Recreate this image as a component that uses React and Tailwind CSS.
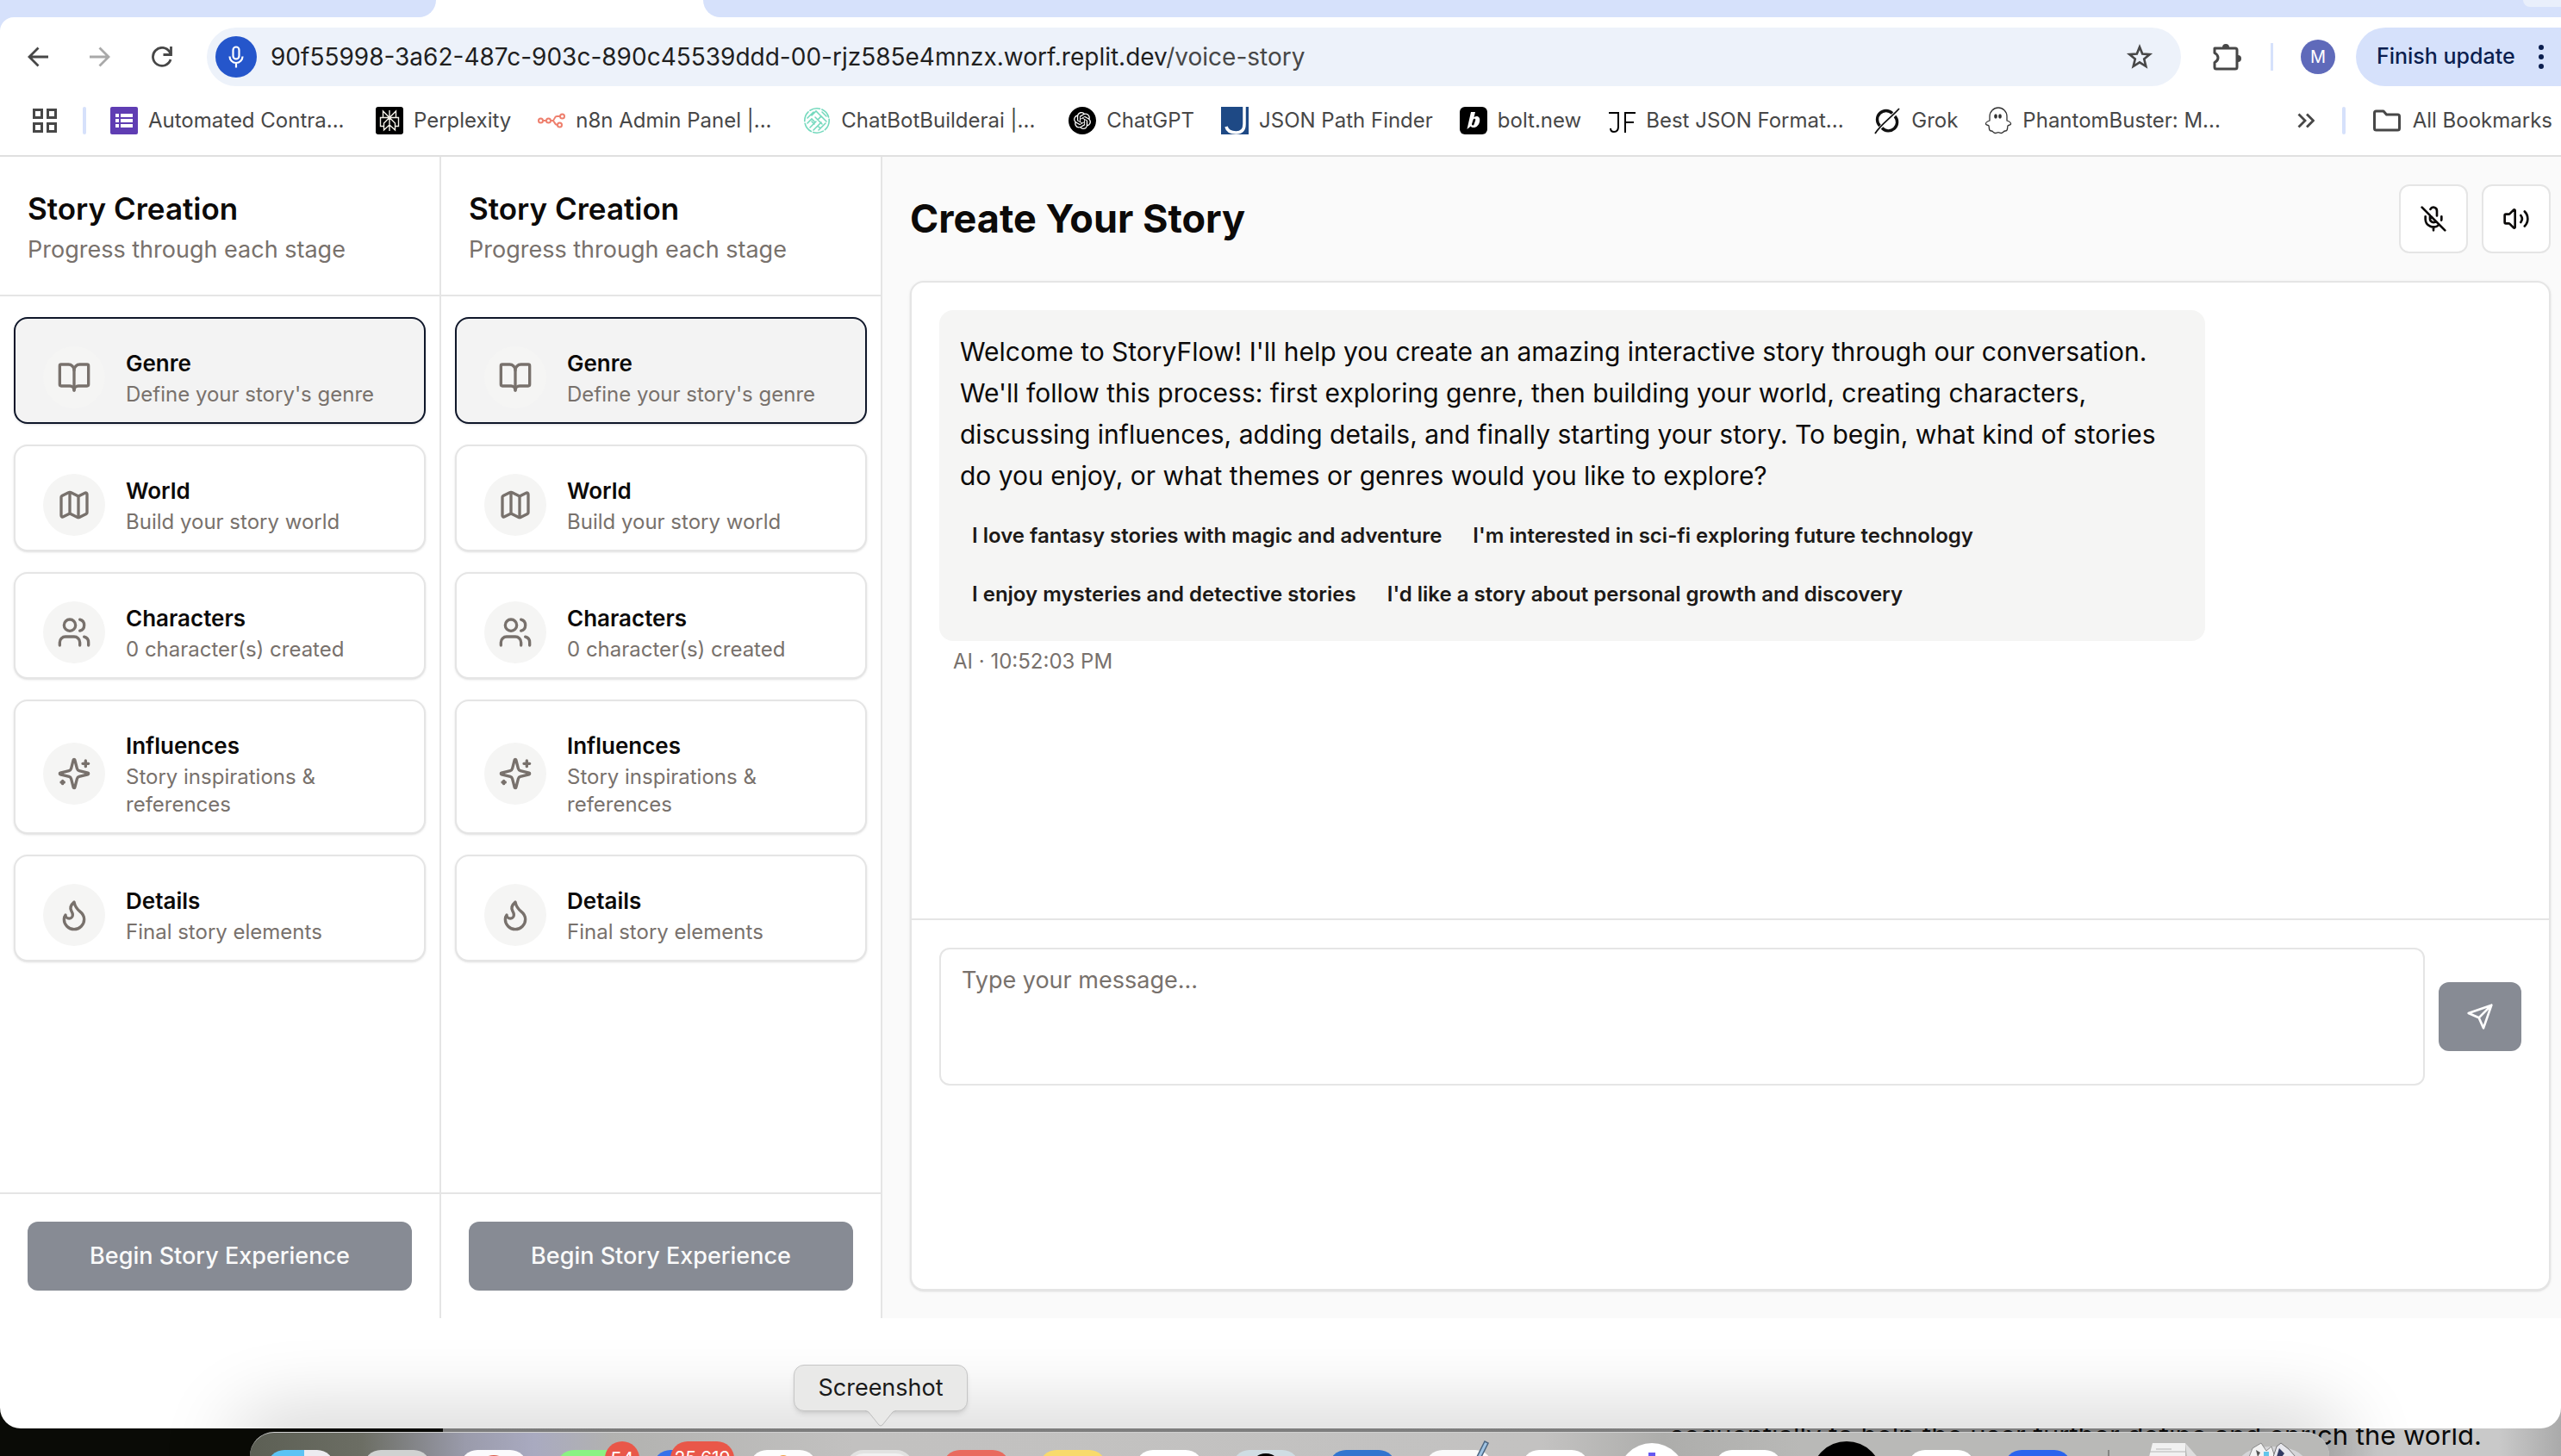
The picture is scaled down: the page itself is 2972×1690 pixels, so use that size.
import React from "react";
import { BookOpen, Map } from "lucide-react";
import { SiOpenai } from "react-icons/si";

function Line({ children, className }) {
  return (
    <svg viewBox="0 0 24 24" fill="none" stroke="currentColor" strokeWidth="2" strokeLinecap="round" strokeLinejoin="round" className={className} aria-hidden="true">
      {children}
    </svg>
  );
}

const UsersIcon = (p) => (
  <Line {...p}>
    <path d="M16 21v-2a4 4 0 0 0-4-4H6a4 4 0 0 0-4 4v2" />
    <circle cx="9" cy="7" r="4" />
    <path d="M22 21v-2a4 4 0 0 0-3-3.87" />
    <path d="M16 3.13a4 4 0 0 1 0 7.75" />
  </Line>
);
const SparklesIcon = (p) => (
  <Line {...p}>
    <path d="M9.937 15.5A2 2 0 0 0 8.5 14.063l-6.135-1.582a.5.5 0 0 1 0-.962L8.5 9.936A2 2 0 0 0 9.937 8.5l1.582-6.135a.5.5 0 0 1 .963 0L14.063 8.5A2 2 0 0 0 15.5 9.937l6.135 1.581a.5.5 0 0 1 0 .964L15.5 14.063a2 2 0 0 0-1.437 1.437l-1.582 6.135a.5.5 0 0 1-.963 0z" />
    <path d="M20 3v4M22 5h-4M4 17v2M5 18H3" />
  </Line>
);
const FlameIcon = (p) => (
  <Line {...p}>
    <path d="M8.5 14.5A2.5 2.5 0 0 0 11 12c0-1.38-.5-2-1-3-1.072-2.143-.224-4.054 2-6 .5 2.5 2 4.9 4 6.5 2 1.6 3 3.5 3 5.5a7 7 0 1 1-14 0c0-1.153.433-2.294 1-3a2.5 2.5 0 0 0 2.5 2.5z" />
  </Line>
);
const MicOffIcon = (p) => (
  <Line {...p}>
    <path d="M2 2l20 20M18.89 13.23A7.12 7.12 0 0 0 19 12v-2M5 10v2a7 7 0 0 0 12 5M15 9.34V5a3 3 0 0 0-5.68-1.33M9 9v3a3 3 0 0 0 5.12 2.12M12 19v3" />
  </Line>
);
const VolumeIcon = (p) => (
  <Line {...p}>
    <path d="M11 4.702a.705.705 0 0 0-1.203-.498L6.413 7.587A1.4 1.4 0 0 1 5.416 8H3a1 1 0 0 0-1 1v6a1 1 0 0 0 1 1h2.416a1.4 1.4 0 0 1 .997.413l3.383 3.384A.705.705 0 0 0 11 19.298z" />
    <path d="M16 9a5 5 0 0 1 0 6M19.364 18.364a9 9 0 0 0 0-12.728" />
  </Line>
);
const SendIcon = (p) => (
  <Line {...p}>
    <path d="m22 2-7 20-4-9-9-4ZM22 2 11 13" />
  </Line>
);

/* ---------- favicons ---------- */

const FormsIcon = () => (
  <svg viewBox="0 0 32 32" className="size-8">
    <rect width="32" height="32" rx="2" fill="#5f3db3" />
    <g fill="#fff">
      <rect x="6" y="8" width="4" height="4" /><rect x="6" y="14" width="4" height="4" /><rect x="6" y="20" width="4" height="4" />
      <rect x="12" y="8" width="14" height="4" /><rect x="12" y="14" width="14" height="4" /><rect x="12" y="20" width="14" height="4" />
    </g>
  </svg>
);
const PerplexityIcon = () => (
  <svg viewBox="0 0 32 32" className="size-8">
    <rect width="32" height="32" rx="3" fill="#000" />
    <path d="M16 4v24M8.500 5l7.500 7.500L23.500 5v7.500h-15zM8.500 12.500H5.500v10h4M23.500 12.500h3v10h-4M16 12.500l-6.500 6.500v8L16 21l6.500 6v-8z" fill="none" stroke="#f4f1e8" strokeWidth="1.400" />
  </svg>
);
const N8nIcon = () => (
  <svg viewBox="0 0 32 32" className="size-8" fill="none" stroke="#ee7f6d" strokeWidth="2">
    <circle cx="3.500" cy="16" r="2.500" /><circle cx="12.500" cy="16" r="2.500" /><circle cx="28.500" cy="11" r="2.500" /><circle cx="25.500" cy="21" r="2.500" />
    <path d="M6 16h4M15 16h2c3 0 2-5 5-5h4M17 16c3 0 2 5 6 5" />
  </svg>
);
const ChatBotIcon = () => (
  <svg viewBox="0 0 32 32" className="size-8" fill="none" stroke="#74d9bd" strokeWidth="1.600" strokeLinecap="round">
    <circle cx="16" cy="16" r="14.200" strokeDasharray="12 2.500" />
    <path d="M5 13l7-7M5 19l5-5 3 3M8 24l7-7M10 10l5-5 4 4M12 27l9-9M14 12l8 8M17 7l9 9M18 27l8-8M22 6l5 5M13 20l-3-3M17 15l4-4 6 6M17 22l3 3" />
  </svg>
);
const ChatGptIcon = () => (
  <span className="flex size-8 items-center justify-center rounded-full bg-black text-white">
    <SiOpenai className="size-5" />
  </span>
);
const JsonPathIcon = () => (
  <svg viewBox="0 0 32 32" className="size-8">
    <rect width="32" height="32" fill="#1e4985" />
    <path d="M27 0v20c0 7-3 10-9.500 10S7 27 6 23" fill="none" stroke="#fff" strokeWidth="3.500" />
  </svg>
);
const BoltIcon = () => (
  <svg viewBox="0 0 32 32" className="size-8">
    <rect width="32" height="32" rx="6" fill="#000" />
    <path d="M13 6h5l-1.500 6.200c1-.8 2-1.100 3-1.100 3 0 4.300 2.400 3.600 6-.8 4.300-3.600 7-7 7-1.600 0-2.700-.6-3.300-1.700L8.500 26z" fill="#fff" />
    <path d="M17 15l-1.700 5.200" stroke="#000" strokeWidth="2.600" strokeLinecap="round" />
  </svg>
);
const JfIcon = () => (
  <svg viewBox="0 0 32 32" className="size-8" fill="none" stroke="#000" strokeWidth="2">
    <path d="M1 7h12M12 7v16c0 4-2 6-5 6-2 0-4-1-4-4M20 30V7h12M20 18h10" />
  </svg>
);
const GrokIcon = () => (
  <svg viewBox="0 0 32 32" className="size-8" fill="none" stroke="#111">
    <path d="M22 7.500A10 10 0 0 0 7.500 22M10 24.500A10 10 0 0 0 25 11" strokeWidth="3.400" />
    <path d="M2 31C8 21 20 13 30 2" strokeWidth="1.800" />
  </svg>
);
const GhostIcon = () => (
  <svg viewBox="0 0 32 32" className="size-8" fill="none" stroke="#333" strokeWidth="1.300" strokeLinejoin="round">
    <path d="M6 16V11a10 10 0 0 1 20 0v5c3 1 5 2 4.500 4-.4 1.500-3 1-3.500 2-.8 3 .5 6-3 6-2 0-2.500 2.500-4.500 2.500-1.600 0-2-.8-3.500-.8s-2 .8-3.500.8C10 30.500 10 28 8 28c-3.500 0-2.200-3-3-6-.5-1-3.100-.5-3.500-2C1 18 3 17 6 16z" />
    <ellipse cx="13" cy="11" rx="1.200" ry="2" fill="#333" /><ellipse cx="18" cy="11" rx="1.200" ry="2" fill="#333" />
  </svg>
);

const bookmarks = [
  { label: "Automated Contra...", Icon: FormsIcon, wide: true },
  { label: "Perplexity", Icon: PerplexityIcon },
  { label: "n8n Admin Panel |...", Icon: N8nIcon, wide: true },
  { label: "ChatBotBuilderai |...", Icon: ChatBotIcon, wide: true },
  { label: "ChatGPT", Icon: ChatGptIcon },
  { label: "JSON Path Finder", Icon: JsonPathIcon },
  { label: "bolt.new", Icon: BoltIcon },
  { label: "Best JSON Format...", Icon: JfIcon, wide: true },
  { label: "Grok", Icon: GrokIcon },
  { label: "PhantomBuster: M...", Icon: GhostIcon, wide: true },
];

function BrowserChrome() {
  return (
    <header className="shrink-0 border-b-2 border-[#e0e0e0] bg-white text-[#474747]">
      <div className="relative flex h-5 justify-between">
        <div className="w-[506px] rounded-br-3xl bg-[#d6e1fb]" />
        <div className="ml-[310px] flex flex-1 justify-end overflow-hidden rounded-bl-3xl bg-[#d6e1fb]">
          <div className="h-2 w-11 rounded-bl-2xl bg-[#e9effb]" />
        </div>
      </div>
      <div className="bg-[linear-gradient(to_right,#d6e1fb_40px,#ffffff_40px)]">
        <div className="flex h-[92px] items-center rounded-tl-2xl bg-white pl-8">
          <button aria-label="Back" className="text-[#474747]">
            <svg viewBox="0 0 24 24" className="size-6" fill="none" stroke="currentColor" strokeWidth="2.800"><path d="M24 12H2M12.500 1.500 2 12l10.500 10.500" /></svg>
          </button>
          <button aria-label="Forward" className="ml-12 text-[#a9a9a9]">
            <svg viewBox="0 0 24 24" className="size-6" fill="none" stroke="currentColor" strokeWidth="2.800"><path d="M0 12h22M11.500 1.500 22 12 11.500 22.500" /></svg>
          </button>
          <button aria-label="Reload" className="ml-12 text-[#474747]">
            <svg viewBox="0 0 24 24" className="size-6" fill="none" stroke="currentColor" strokeWidth="2.800"><path d="M22 15A10.500 10.500 0 1 1 21 6.500L22.500 9" /><path d="M22.500 0v9.500H13.500" /></svg>
          </button>
          <div className="ml-10 flex h-[68px] flex-1 items-center rounded-full bg-[#edf2fa] pr-8 pl-2.5">
            <span className="flex size-12 items-center justify-center rounded-full bg-[#2556cb] text-white">
              <svg viewBox="0 0 18 26" className="h-[26px] w-[18px]" fill="none" stroke="currentColor" strokeWidth="2.200"><rect x="5.500" y="1.500" width="7" height="14" rx="3.500" /><path d="M1.500 12.500a7.500 7.500 0 0 0 15 0M9 20v5.500" /></svg>
            </span>
            <div className="ml-4 flex-1 text-[28px] whitespace-nowrap text-[#1f1f1f]">
              90f55998-3a62-487c-903c-890c45539ddd-00-rjz585e4mnzx.worf.replit.dev<span className="text-[#474747]">/voice-story</span>
            </div>
            <button aria-label="Bookmark this tab" className="text-[#474747]">
              <svg viewBox="0 0 32 32" className="size-8" fill="none" stroke="currentColor" strokeWidth="2.600"><path d="M16 4.500l3.200 8 8.600.6-6.600 5.500 2.100 8.400L16 22.400 8.700 27l2.100-8.400-6.600-5.500 8.600-.6z" /></svg>
            </button>
          </div>
          <button aria-label="Extensions" className="ml-9 text-[#474747]">
            <svg viewBox="0 0 36 36" className="size-9" fill="none" stroke="currentColor" strokeWidth="3"><path d="M3 8h24q2 0 2 2v20q0 2-2 2H5q-2 0-2-2v-5.500q4-2 4-5.500t-4-5.500z" strokeLinejoin="round" /><path d="M12 7a4 4 0 0 1 8 0zM30 16a4 4 0 0 1 0 8z" fill="currentColor" stroke="none" /></svg>
          </button>
          <div className="ml-8 h-8 w-[3px] bg-[#d6e1fb]" />
          <div className="ml-8 flex size-10 items-center justify-center rounded-full bg-[#5f6aba] text-xl text-white">M</div>
          <button className="ml-6 flex h-[68px] w-[238px] items-center justify-between rounded-l-full rounded-r-[34px] bg-[#d6e1fb] pr-5 pl-6 text-[25px] font-medium whitespace-nowrap text-[#0b1e4f]">
            Finish update
            <svg viewBox="0 0 6 28" className="h-7 w-1.5" fill="currentColor"><circle cx="3" cy="3" r="3" /><circle cx="3" cy="14" r="3" /><circle cx="3" cy="25" r="3" /></svg>
          </button>
        </div>
      </div>
      <nav aria-label="Bookmarks" className="flex h-[68px] items-start pt-3 pr-2.5 pl-9 text-2xl leading-8">
        <button aria-label="Apps" className="flex h-8 items-center">
          <svg viewBox="0 0 32 32" className="size-8" fill="none" stroke="currentColor" strokeWidth="3"><rect x="3.500" y="3.500" width="9" height="9" /><rect x="19.500" y="3.500" width="9" height="9" /><rect x="3.500" y="19.500" width="9" height="9" /><rect x="19.500" y="19.500" width="9" height="9" /></svg>
        </button>
        <div className="ml-7 h-8 w-1 rounded bg-[#d6e1fb]" />
        <div className="ml-7 flex flex-1 gap-[31px]">
          {bookmarks.map(({ label, Icon, wide }) => (
            <a key={label} href="#" className={wide ? "flex w-[277px] shrink-0 gap-3 whitespace-nowrap" : "flex shrink-0 gap-3 whitespace-nowrap"}>
              <Icon />
              {label}
            </a>
          ))}
        </div>
        <button aria-label="More bookmarks" className="flex h-8 items-center">
          <svg viewBox="0 0 20 18" className="h-[18px] w-5" fill="none" stroke="currentColor" strokeWidth="2.800"><path d="M1.500 1.500 9 9l-7.500 7.500M11 1.500 18.500 9 11 16.500" /></svg>
        </button>
        <div className="ml-8 h-8 w-1 rounded bg-[#d6e1fb]" />
        <a href="#" className="ml-8 flex gap-3.5 whitespace-nowrap">
          <svg viewBox="0 0 32 32" className="size-8" fill="none" stroke="currentColor" strokeWidth="3" strokeLinejoin="round"><path d="M1.500 7q0-2 2-2H12l3.500 4h13q2 0 2 2v14q0 2-2 2h-25q-2 0-2-2z" /></svg>
          All Bookmarks
        </a>
      </nav>
    </header>
  );
}

const stages = [
  { title: "Genre", text: "Define your story's genre", Icon: BookOpen, active: true },
  { title: "World", text: "Build your story world", Icon: Map },
  { title: "Characters", text: "0 character(s) created", Icon: UsersIcon },
  { title: "Influences", text: "Story inspirations & references", Icon: SparklesIcon },
  { title: "Details", text: "Final story elements", Icon: FlameIcon },
];

function StageCard({ title, text, Icon, active }) {
  return (
    <div
      className={
        active
          ? "flex items-center gap-6 rounded-2xl border-2 border-[#0f172a] bg-[#f3f3f3] px-8 pt-8 pb-4 shadow-sm"
          : "flex items-center gap-6 rounded-2xl border-2 border-[#e5e5e5] bg-white px-8 pt-8 pb-4 shadow-sm"
      }
    >
      <div className="flex size-[72px] shrink-0 items-center justify-center rounded-full bg-[#f5f5f4] text-[#78716c]">
        <Icon className="size-10" />
      </div>
      <div>
        <h3 className="text-[26px] leading-10 font-semibold text-[#0c0a09]">{title}</h3>
        <p className="text-2xl leading-8 text-[#78716c]">{text}</p>
      </div>
    </div>
  );
}

function Sidebar() {
  return (
    <aside className="flex w-[512px] shrink-0 flex-col border-r-2 border-[#e5e5e5] bg-white">
      <div className="border-b-2 border-[#e5e5e5] p-8">
        <h2 className="text-[35px] leading-[56px] font-semibold text-[#0c0a09]">Story Creation</h2>
        <p className="text-[27px] leading-10 text-[#78716c]">Progress through each stage</p>
      </div>
      <div className="flex flex-1 flex-col gap-6 px-4 py-6">
        {stages.map((s) => (
          <StageCard key={s.title} {...s} />
        ))}
      </div>
      <div className="border-t-2 border-[#e5e5e5] p-8">
        <button className="h-20 w-full rounded-xl bg-[#878b94] text-[27px] font-medium text-[#fafafa]">Begin Story Experience</button>
      </div>
    </aside>
  );
}

const suggestions = [
  "I love fantasy stories with magic and adventure",
  "I'm interested in sci-fi exploring future technology",
  "I enjoy mysteries and detective stories",
  "I'd like a story about personal growth and discovery",
];

function StoryPanel() {
  return (
    <main className="flex flex-1 flex-col bg-[#fafafa] py-8 pr-3 pl-8 text-[#0c0a09]">
      <div className="flex items-center justify-between">
        <h1 className="text-[45px] font-bold">Create Your Story</h1>
        <div className="flex gap-4">
          <button aria-label="Turn microphone on" className="flex size-20 items-center justify-center rounded-xl border-2 border-[#e5e5e5] bg-white">
            <MicOffIcon className="size-8" />
          </button>
          <button aria-label="Toggle sound" className="flex size-20 items-center justify-center rounded-xl border-2 border-[#e5e5e5] bg-white">
            <VolumeIcon className="size-8" />
          </button>
        </div>
      </div>
      <section className="mt-8 flex flex-1 flex-col rounded-2xl border-2 border-[#e5e5e5] bg-white shadow-sm">
        <div className="h-[738px] p-8">
          <div className="max-w-4/5 rounded-2xl bg-[#f5f5f4] p-6">
            <p className="text-3xl leading-12">
              Welcome to StoryFlow! I'll help you create an amazing interactive story through our conversation. We'll follow this process: first exploring genre, then building your world, creating characters, discussing influences, adding details, and finally starting your story. To begin, what kind of stories do you enjoy, or what themes or genres would you like to explore?
            </p>
            <div className="mt-4 flex flex-wrap gap-2">
              {suggestions.map((s) => (
                <button key={s} className="h-15 px-3.5 text-2xl font-semibold text-[#1c1917]">{s}</button>
              ))}
            </div>
          </div>
          <p className="mt-2 px-4 text-2xl leading-8 text-[#78716c]">AI · 10:52:03 PM</p>
        </div>
        <div className="flex items-center gap-4 border-t-2 border-[#e5e5e5] p-8">
          <textarea aria-label="Message" placeholder="Type your message..." className="h-40 flex-1 resize-none rounded-xl border-2 border-[#e5e5e5] bg-white px-6 py-4 text-[27px] leading-10 placeholder:text-[#78716c]" />
          <button aria-label="Send" className="flex h-20 w-24 items-center justify-center rounded-xl bg-[#878b94] text-white">
            <SendIcon className="size-8" />
          </button>
        </div>
      </section>
    </main>
  );
}

/* ---------- dock ---------- */

const tile = "relative h-20 w-[78px] shrink-0 overflow-hidden rounded-[20px]";

function Dock() {
  return (
    <div className="absolute inset-x-0 bottom-0 h-7 overflow-visible pr-[269px] pl-[290px] text-white">
      <div className="flex h-7 items-start gap-[34px] rounded-t-[28px] border-t border-[#d0d0d0] bg-[linear-gradient(to_right,#5c5f54_0px,#6c6e64_130px,#9a9bab_250px,#a9aac0_330px,#b2b2b0_420px,#c2c1c0_700px,#c3c2c1_1500px,#adadab_1640px,#b9b9b7_1800px,#b9b9b7_100%)] px-5 pt-5 shadow-[0_0_90px_20px_rgba(0,0,0,0.2)]">
        <div className="h-2 w-[78px] overflow-hidden"><div className={`${tile} bg-[linear-gradient(to_right,#5cc3f4_55%,#ecebf0_55%)]`} /></div>
        <div className="h-2 w-[78px] overflow-hidden"><div className={`${tile} bg-[#d0d2d1]`} /></div>
        <div className="h-2 w-[78px] overflow-hidden"><div className={`${tile} bg-[#fbfafc]`}><div className="mx-auto mt-1.5 size-10 rounded-full bg-[#d95845]" /></div></div>
        <div className="relative h-2 w-[78px]">
          <div className="h-2 overflow-hidden"><div className={`${tile} bg-[#8bf283]`} /></div>
          <span className="absolute -top-2.5 left-14 flex h-10 min-w-10 items-center justify-center rounded-full bg-[#e95749] px-1 text-[22px]">54</span>
        </div>
        <div className="relative h-2 w-[78px]">
          <div className="h-2 overflow-hidden"><div className={`${tile} bg-[#3670ea]`} /></div>
          <span className="absolute -top-2.5 left-5 flex h-10 w-[74px] items-center justify-center rounded-full bg-[#e95749] text-[21px]">25,619</span>
        </div>
        <div className="h-2 w-[78px] overflow-hidden"><div className={`${tile} bg-[#fdfdfd]`}><div className="mx-auto mt-1.5 size-4 rounded-full bg-[#f0a044]" /></div></div>
        <div className="h-2 w-[78px] overflow-hidden"><div className={`${tile} border-4 border-[#e2e2e1] bg-[#f1f1f1]`} /></div>
        <div className="h-2 w-[78px] overflow-hidden"><div className={`${tile} bg-[#e96a5e]`} /></div>
        <div className="h-2 w-[78px] overflow-hidden"><div className={`${tile} bg-[#f8da6c]`} /></div>
        <div className="h-2 w-[78px] overflow-hidden"><div className={`${tile} bg-white`} /></div>
        <div className="h-2 w-[78px] overflow-hidden"><div className={`${tile} bg-[#d0dde3]`}><div className="mx-auto mt-1 size-9 rounded-full bg-black" /></div></div>
        <div className="h-2 w-[78px] overflow-hidden"><div className={`${tile} bg-[#3375cf]`} /></div>
        <div className="relative h-2 w-[78px]">
          <div className="h-2 overflow-hidden"><div className={`${tile} bg-[#fafafa]`} /></div>
          <svg viewBox="0 0 20 20" className="absolute -top-3 left-14 size-5"><path d="M4 20 13 2l4 2-8 16z" fill="#9fc4e4" stroke="#4b6580" strokeWidth="1.500" /></svg>
        </div>
        <div className="h-2 w-[78px] overflow-hidden"><div className={`${tile} bg-white`} /></div>
        <div className="relative h-2 w-[78px]">
          <svg viewBox="0 0 78 16" className="absolute -top-2 left-0 h-4 w-[78px]"><circle cx="39" cy="39" r="39" fill="#fff" /><path d="M35 16v-5h8v5M22 16v-1h3v1M53 16v-1h3v1" fill="#6558f0" /></svg>
        </div>
        <div className="h-2 w-[78px] overflow-hidden"><div className={`${tile} bg-white`} /></div>
        <div className="relative h-2 w-[78px]">
          <svg viewBox="0 0 82 18" className="absolute -top-2.5 left-0 h-[18px] w-[82px]"><circle cx="41" cy="41" r="41" fill="#000" /></svg>
        </div>
        <div className="h-2 w-[78px] overflow-hidden"><div className={`${tile} bg-white`} /></div>
        <div className="h-2 w-[78px] overflow-hidden"><div className={`${tile} bg-[#2b64ee]`} /></div>
        <div className="relative ml-2 h-2 w-0.5 bg-[#858583]" />
        <svg viewBox="0 0 60 18" className="-mt-2.5 ml-2.5 h-[18px] w-[60px] shrink-0"><path d="M6 2h38v16H2z" fill="#f1f1f1" /><path d="M44 2l14 16H46z" fill="#dedede" /><path d="M2 12h42M10 9h18" stroke="#b5b5b5" strokeWidth="1" /></svg>
        <svg viewBox="0 0 78 18" className="-mt-2.5 ml-3 h-[18px] w-[78px] shrink-0"><ellipse cx="39" cy="22" rx="37" ry="16" fill="#d5d5d8" /><path d="M12 18 16 8l10-6 6 9 6-5 4 12z" fill="#f2f2f2" stroke="#8a8a8a" /><path d="M40 18 44 6l5-4 9 7 8 9z" fill="#e8e8ee" stroke="#777" /><path d="M47 8l6 6-3 4h-6z" fill="#333c63" /><path d="M29 12h6v6h-6z" fill="#62c6ea" /><path d="M20 10l5 3-3 5z" fill="#555" /></svg>
      </div>
    </div>
  );
}

function DockTooltip() {
  return (
    <div className="absolute bottom-[52px] left-[921px] z-10 flex h-[54px] w-[202px] items-center justify-center rounded-xl border border-[#c6c6c6] bg-[#e9e9e8] text-[27px] text-[#1a1a1a] shadow-md">
      Screenshot
      <svg viewBox="0 0 36 20" className="absolute top-[51px] left-[82px] h-5 w-9"><path d="M0 0h36v1.500q-4 0-6 4L20 18q-2 2-4 0L6 5.500q-2-4-6-4z" fill="#e9e9e8" /><path d="M0 1.500q4 0 6 4L16 18q2 2 4 0L30 5.500q2-4 6-4" fill="none" stroke="#bdbdbd" /></svg>
    </div>
  );
}

export default function App() {
  return (
    <div className="relative flex h-screen flex-col overflow-hidden bg-[linear-gradient(to_right,#0a0b06_514px,#8b8b8b_514px,#8f8f8f_2600px,#c9c9c9_2760px,#c9c9c9_2900px,#aaaaaa_100%)] font-['Inter',sans-serif]">
      <p className="absolute right-[92px] bottom-1 text-[31px] leading-10 whitespace-nowrap text-[#0a0a0a]">
        sequentially to help the user further define and enrich the world.
      </p>
      <div className="relative mb-8 flex flex-1 flex-col overflow-hidden rounded-b-3xl bg-white">
        <BrowserChrome />
        <div className="flex flex-1">
          <Sidebar />
          <Sidebar />
          <StoryPanel />
        </div>
        <div className="h-32 shrink-0" />
      </div>
      <Dock />
      <DockTooltip />
    </div>
  );
}
